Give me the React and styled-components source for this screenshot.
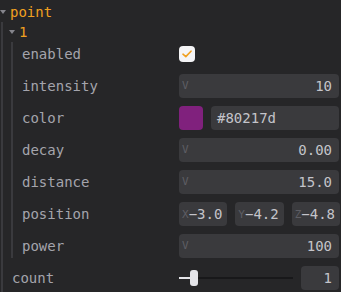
import React from 'react';
import styled, { createGlobalStyle } from 'styled-components';

const GlobalStyle = createGlobalStyle`
    html, body {
        margin: 0;
        padding: 0;
        background: #262628;
    }
    body {
        font-family: "DejaVu Sans Mono", "Liberation Mono", monospace;
        font-size: 14px;
        color: #a4a4ac;
    }
`;

const Panel = styled.div`
    width: 341px;
    height: 292px;
    padding-right: 2px;
    box-sizing: border-box;
    overflow: hidden;
`;

const FolderTitle = styled.div`
    display: flex;
    align-items: center;
    gap: 4px;
    height: 20px;
    margin-top: ${(p) => (p.$top ? '2px' : '0')};
    color: #f0a020;
`;

const Caret = styled.span`
    width: 0;
    height: 0;
    border-left: 3.5px solid transparent;
    border-right: 3.5px solid transparent;
    border-top: 4px solid #85858c;
`;

const FolderContent = styled.div`
    display: flex;
    flex-direction: column;
    gap: 8px;
    margin-left: ${(p) => p.$indent}px;
    border-left: 2px solid #3a3a3e;
    padding-left: 6px;
    padding-bottom: ${(p) => p.$bottom || 0}px;
`;

const Row = styled.div`
    display: grid;
    grid-template-columns: 1fr 160px;
    align-items: center;
    height: 24px;
`;

const Label = styled.span`
    padding-left: 3px;
    color: #a4a4ac;
`;

const Field = styled.div`
    position: relative;
    display: flex;
    align-items: center;
    justify-content: ${(p) => (p.$left ? 'flex-start' : 'flex-end')};
    height: 24px;
    padding: 0 7px 0 6px;
    box-sizing: border-box;
    background: #3a3a3d;
    border-radius: 4px;
    color: #c4c4ca;
    flex: ${(p) => (p.$grow ? 1 : 'none')};
    width: ${(p) => (p.$w ? `${p.$w}px` : 'auto')};
`;

const Hint = styled.span`
    position: absolute;
    left: 3px;
    top: 5px;
    font-size: 11px;
    color: #5e5e64;
`;

const AxisField = styled.div`
    display: flex;
    align-items: center;
    justify-content: space-between;
    height: 24px;
    padding: 0 5px 0 3px;
    box-sizing: border-box;
    background: #3a3a3d;
    border-radius: 4px;
    color: #c4c4ca;
`;

const Axis = styled.span`
    font-size: 11px;
    color: #5e5e64;
`;

const Check = styled.div`
    width: 16px;
    height: 16px;
    border-radius: 4px;
    background: #f4f4f6;
    display: flex;
    align-items: center;
    justify-content: center;
`;

const Pair = styled.div`
    display: flex;
    gap: 8px;
`;

const Swatch = styled.div`
    width: 24px;
    height: 24px;
    border-radius: 4px;
    background: ${(p) => p.$color};
`;

const Vector = styled.div`
    display: grid;
    grid-template-columns: repeat(3, 1fr);
    gap: 8px;
`;

const SliderBox = styled.div`
    display: flex;
    align-items: center;
    gap: 8px;
`;

const Track = styled.div`
    position: relative;
    flex: 1;
    height: 24px;
    &::before {
        content: '';
        position: absolute;
        left: 0;
        right: 0;
        top: 11px;
        height: 2px;
        background: #18181a;
    }
`;

const Fill = styled.div`
    position: absolute;
    left: 0;
    top: 11px;
    height: 2px;
    background: #e4e4e8;
`;

const Thumb = styled.div`
    position: absolute;
    top: 4px;
    width: 8px;
    height: 16px;
    border-radius: 3px;
    background: #e4e4e8;
`;

const NumberRow = ({ label, value }) => (
    <Row>
        <Label>{label}</Label>
        <Field>
            <Hint>V</Hint>
            {value}
        </Field>
    </Row>
);

const App = () => {
    const sliderFill = 11;
    return (
        <Panel>
            <GlobalStyle />
            <FolderTitle $top>
                <Caret />
                point
            </FolderTitle>
            <FolderContent $indent={1} $bottom={6}>
                <div>
                    <FolderTitle>
                        <Caret />1
                    </FolderTitle>
                    <FolderContent $indent={2}>
                        <Row>
                            <Label>enabled</Label>
                            <Check>
                                <svg width="10" height="8" viewBox="0 0 10 8">
                                    <path d="M1 4.2 L3.8 6.6 L9 1.2" fill="none" stroke="#f0a020" strokeWidth="1.6" strokeLinecap="round" strokeLinejoin="round" />
                                </svg>
                            </Check>
                        </Row>
                        <NumberRow label="intensity" value="10" />
                        <Row>
                            <Label>color</Label>
                            <Pair>
                                <Swatch $color="#80217d" />
                                <Field $grow $left>#80217d</Field>
                            </Pair>
                        </Row>
                        <NumberRow label="decay" value="0.00" />
                        <NumberRow label="distance" value="15.0" />
                        <Row>
                            <Label>position</Label>
                            <Vector>
                                {[['X', '−3.0'], ['Y', '−4.2'], ['Z', '−4.8']].map(([k, v]) => (
                                    <AxisField key={k}>
                                        <Axis>{k}</Axis>
                                        <span>{v}</span>
                                    </AxisField>
                                ))}
                            </Vector>
                        </Row>
                        <NumberRow label="power" value="100" />
                    </FolderContent>
                </div>
                <Row>
                    <Label>count</Label>
                    <SliderBox>
                        <Track>
                            <Fill style={{ width: sliderFill }} />
                            <Thumb style={{ left: sliderFill }} />
                        </Track>
                        <Field $w={38}>1</Field>
                    </SliderBox>
                </Row>
            </FolderContent>
        </Panel>
    );
};

export default App;
